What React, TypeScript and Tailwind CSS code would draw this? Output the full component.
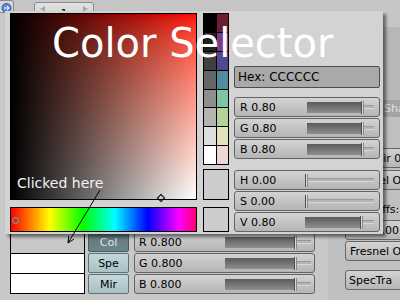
import React from "react";

const palette = [
  ["#000000", "#6a1e34"],
  ["#202020", "#7c3a8e"],
  ["#404040", "#534890"],
  ["#666666", "#508c9a"],
  ["#8e8e8e", "#7ec4a5"],
  ["#b4b4b4", "#b3d496"],
  ["#dedede", "#e2e3bc"],
  ["#ffffff", "#eed6d2"],
];

function Slider({
  label,
  frac,
  labelW,
  pad,
}: {
  label: string;
  frac: number;
  labelW: string;
  pad: string;
}) {
  return (
    <div
      className={`flex h-[20px] items-center rounded-[3px] border border-[#636363] bg-linear-to-b from-[#d3d3d3] to-[#b5b5b5] text-[11px] leading-none text-black ${pad}`}
    >
      <span className={`${labelW} shrink-0 whitespace-nowrap`}>{label}</span>
      <div className="flex h-[11px] flex-1 items-center">
        <div
          className="h-full bg-linear-to-b from-[#5b5b5b] to-[#8f8f8f]"
          style={{ width: `${frac * 100}%` }}
        />
        <div className="h-[13px] w-[3px] shrink-0 border-x border-l-[#4d4d4d] border-r-[#8a8a8a] bg-[#dadada]" />
        <div className="h-[4px] flex-1 border-y border-t-[#9a9a9a] border-b-[#d8d8d8] bg-[#b4b4b4]" />
      </div>
    </div>
  );
}

function GrayButton({ label, pad }: { label: string; pad: string }) {
  return (
    <div
      className={`flex h-[20px] w-[90px] items-center whitespace-nowrap rounded-[3px] border border-[#666666] bg-linear-to-b from-[#d3d3d3] to-[#b6b6b6] text-[11px] leading-none text-black ${pad}`}
    >
      {label}
    </div>
  );
}

function Header() {
  return (
    <div className="flex h-[12px] items-start bg-[#c6c6c6]">
      <div className="flex h-[13px] w-[14px] shrink-0 items-end justify-center rounded-r-[3px] border border-l-0 border-[#8a8a8a] bg-[#d6d6d6]">
        <svg width="11" height="10" viewBox="0 0 11 10">
          <circle cx="5.5" cy="6" r="4.5" fill="#5b8fd6" stroke="#2e5a9a" />
          <path d="M3 6h5M6 4l2 2-2 2" stroke="#ffffff" fill="none" />
        </svg>
      </div>
      <div className="ml-[20px] mt-[2px] flex h-[22px] w-[60px] shrink-0 items-center justify-between rounded-[3px] border border-[#8c8c8c] bg-linear-to-b from-[#e2e2e2] to-[#cdcdcd] px-[5px] text-[11px] leading-none">
        <svg width="5" height="6" viewBox="0 0 5 6" className="-mt-[8px]">
          <polygon points="5,0 0,3 5,6" fill="#a8a8a8" />
        </svg>
        <span>1</span>
        <svg width="5" height="6" viewBox="0 0 5 6" className="-mt-[8px]">
          <polygon points="0,0 5,3 0,6" fill="#a8a8a8" />
        </svg>
      </div>
    </div>
  );
}

function LeftSection() {
  return (
    <div className="flex w-[328px] shrink-0 flex-col">
      <div className="flex-1" />
      <div className="mb-[6px] flex h-[62px]">
        <div className="ml-[10px] flex w-[75px] flex-col border border-black">
          <div className="h-[20px] bg-[#c8c8c8]" />
          <div className="h-[20px] border-t border-black bg-white" />
          <div className="flex-1 border-t border-black bg-white" />
        </div>
        <div className="ml-[3px] flex w-[41px] flex-col gap-px text-[11px] leading-none">
          <div className="flex h-[20px] items-center justify-center rounded-[2px] border border-[#4a5c60] bg-linear-to-b from-[#5d777c] to-[#6c878c] text-[#e4e4e4]">
            Col
          </div>
          <div className="flex h-[20px] items-center justify-center rounded-[2px] border border-[#5f7276] bg-linear-to-b from-[#c3d8dc] to-[#a9c0c4]">
            Spe
          </div>
          <div className="flex h-[20px] items-center justify-center rounded-[2px] border border-[#5f7276] bg-linear-to-b from-[#c3d8dc] to-[#a9c0c4]">
            Mir
          </div>
        </div>
        <div className="ml-[5px] flex w-[181px] flex-col gap-px">
          <Slider label="R 0.800" frac={0.8} labelW="w-[86px]" pad="pl-[4px] pr-[3px]" />
          <Slider label="G 0.800" frac={0.8} labelW="w-[86px]" pad="pl-[4px] pr-[3px]" />
          <Slider label="B 0.800" frac={0.8} labelW="w-[86px]" pad="pl-[4px] pr-[3px]" />
        </div>
      </div>
    </div>
  );
}

function RightSection() {
  return (
    <div className="flex flex-1 flex-col bg-[#bdbdbd]">
      <div className="h-[15px] bg-[#c6c6c6]" />
      <div className="ml-[17px] h-[73px] bg-[#b7b7b7]" />
      <div className="ml-[17px] flex h-[17px] w-[90px] items-center bg-[#a4a4a4] text-[11px] leading-none">
        <div className="h-full w-[36px] border-r border-[#7a7a7a]" />
        <span className="pl-[3px] text-[#e0e0e0]">Shaders</span>
      </div>
      <div className="flex flex-col bg-[#c0c0c0] pl-[17px]">
        <div className="mt-[31px]">
          <GrayButton label="RayMir 0.00" pad="pl-[7px]" />
        </div>
        <div className="mt-[2px]">
          <GrayButton label="Fresnel Off" pad="pl-[4px]" />
        </div>
        <div className="mt-[10px] flex h-[18px] items-center pl-[16px] text-[11px] leading-none">
          Coeffs:
        </div>
        <div className="mt-[2px]">
          <GrayButton label="Fac 1.00" pad="pl-[7px]" />
        </div>
        <div className="mt-px">
          <GrayButton label="Fresnel Off" pad="pl-[4px]" />
        </div>
        <div className="mt-[9px] mb-[10px]">
          <GrayButton label="SpecTra" pad="pl-[3px]" />
        </div>
      </div>
    </div>
  );
}

function Popup() {
  return (
    <div className="absolute left-[5px] top-[11px] flex h-[223px] w-[378px] bg-[#d3d3d3] pl-[5px] pt-[2px] shadow-[3px_3px_3px_rgba(0,0,0,0.5)]">
      <div className="flex w-[187px] shrink-0 flex-col gap-[7px]">
        <div className="relative h-[187px] border border-black bg-linear-to-b from-[#ff0000] to-white">
          <div className="h-full w-full bg-linear-to-r from-black to-transparent" />
          <div className="absolute left-[147px] top-[181px] h-[6px] w-[6px] rotate-45 border border-black" />
        </div>
        <div className="relative h-[25px] border border-black bg-[linear-gradient(to_right,#ff0000_0%,#ffff00_21%,#00ff00_39%,#00ffff_56%,#0000ff_74%,#ff00ff_91%,#ff0070_100%)]">
          <div className="absolute left-px top-[9px] h-[7px] w-[7px] rounded-full border border-[#14d0dc]" />
        </div>
      </div>

      <div className="ml-[6px] flex w-[26px] shrink-0 flex-col">
        <div className="grid h-[152px] grid-cols-2 grid-rows-8 gap-px border border-black bg-black">
          {palette.flatMap((row, i) =>
            row.map((c, j) => (
              <div key={`${i}-${j}`} style={{ backgroundColor: c }} />
            ))
          )}
        </div>
        <div className="mt-[4px] h-[31px] border border-black bg-[#cccccc]" />
        <div className="mt-[7px] h-[25px] border border-black bg-[#cccccc]" />
      </div>

      <div className="ml-[5px] flex w-[146px] shrink-0 flex-col">
        <div className="mt-[53px] flex h-[22px] items-center rounded-[2px] border border-[#4e4e4e] bg-[#a9a9a9] pl-[3px] text-[12px] leading-none">
          Hex: CCCCCC
        </div>
        <div className="mt-[9px] flex flex-col gap-px">
          <Slider label="R 0.80" frac={0.8} labelW="w-[67px]" pad="px-[5px]" />
          <Slider label="G 0.80" frac={0.8} labelW="w-[67px]" pad="px-[5px]" />
          <Slider label="B 0.80" frac={0.8} labelW="w-[67px]" pad="px-[5px]" />
        </div>
        <div className="mt-[11px] flex flex-col gap-px">
          <Slider label="H 0.00" frac={0} labelW="w-[65px]" pad="px-[5px]" />
          <Slider label="S 0.00" frac={0} labelW="w-[65px]" pad="px-[5px]" />
          <Slider label="V 0.80" frac={0.8} labelW="w-[65px]" pad="px-[5px]" />
        </div>
      </div>
    </div>
  );
}

export default function App() {
  return (
    <div className="relative h-[300px] w-[400px] overflow-hidden bg-[#c8c8c8] font-['DejaVu_Sans',sans-serif] text-black">
      <Header />
      <div className="flex h-[288px]">
        <LeftSection />
        <RightSection />
      </div>
      <Popup />
      <div className="absolute left-[52px] top-[23px] whitespace-nowrap text-[40px] leading-[40px] text-white">
        Color Selector
      </div>
      <div className="absolute left-[17px] top-[176px] whitespace-nowrap text-[14px] leading-[14px] text-[#f2f2f2]">
        Clicked here
      </div>
      <svg
        className="pointer-events-none absolute left-0 top-0"
        width="400"
        height="300"
        viewBox="0 0 400 300"
      >
        <path
          d="M100 190 L68 243 M68 243 L74 239 M68 243 L68.7 236"
          stroke="#000000"
          strokeWidth="1"
          fill="none"
        />
      </svg>
    </div>
  );
}
